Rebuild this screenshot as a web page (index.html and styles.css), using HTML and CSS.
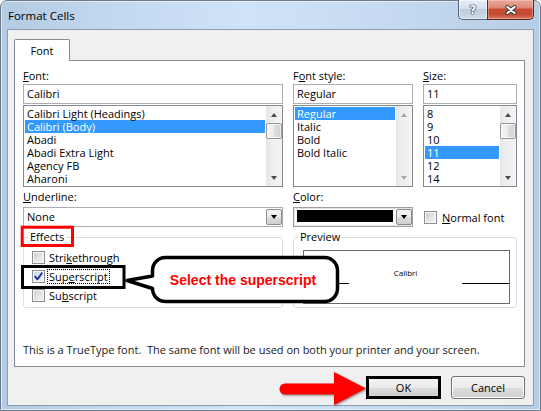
FILE: index.html
```html
<!DOCTYPE html>
<html>
<head>
<meta charset="utf-8">
<title>Format Cells</title>
<link rel="stylesheet" href="styles.css">
</head>
<body>
<div class="window">
  <div class="titlebar">
    <div class="title">Format Cells</div>
    <div class="caption">
      <div class="cap-btn cap-help"><span>?</span></div>
      <div class="cap-btn cap-close">
        <svg width="12" height="10" viewBox="0 0 12 10">
          <path d="M2.5 2 L9.5 8 M9.5 2 L2.5 8" stroke="#3b3b3b" stroke-width="4.2" stroke-linecap="round" fill="none"/>
          <path d="M2.5 2 L9.5 8 M9.5 2 L2.5 8" stroke="#ffffff" stroke-width="2.2" stroke-linecap="round" fill="none"/>
        </svg>
      </div>
    </div>
  </div>
  <div class="client">
    <div class="tabs"><div class="tab">Font</div></div>
    <div class="panel">
      <div class="grid3">
        <div class="col">
          <div class="lbl"><u>F</u>ont:</div>
          <div class="field">Calibri</div>
          <div class="list">
            <div class="items">
              <div class="item">Calibri Light (Headings)</div>
              <div class="item sel">Calibri (Body)</div>
              <div class="item">Abadi</div>
              <div class="item">Abadi Extra Light</div>
              <div class="item">Agency FB</div>
              <div class="item">Aharoni</div>
            </div>
            <div class="vscroll">
              <div class="sb-btn"><span class="tri-up"></span></div>
              <div class="thumb"></div>
              <div class="track"></div>
              <div class="sb-btn"><span class="tri-down"></span></div>
            </div>
          </div>
        </div>
        <div class="col">
          <div class="lbl">F<u>o</u>nt style:</div>
          <div class="field">Regular</div>
          <div class="list">
            <div class="items">
              <div class="item sel">Regular</div>
              <div class="item">Italic</div>
              <div class="item">Bold</div>
              <div class="item">Bold Italic</div>
            </div>
            <div class="vscroll disabled">
              <div class="sb-btn"><span class="tri-up"></span></div>
              <div class="track"></div>
              <div class="sb-btn"><span class="tri-down"></span></div>
            </div>
          </div>
        </div>
        <div class="col">
          <div class="lbl"><u>S</u>ize:</div>
          <div class="field">11</div>
          <div class="list">
            <div class="items">
              <div class="item">8</div>
              <div class="item">9</div>
              <div class="item">10</div>
              <div class="item sel">11</div>
              <div class="item">12</div>
              <div class="item">14</div>
            </div>
            <div class="vscroll">
              <div class="sb-btn"><span class="tri-up"></span></div>
              <div class="thumb"></div>
              <div class="track"></div>
              <div class="sb-btn"><span class="tri-down"></span></div>
            </div>
          </div>
        </div>
      </div>

      <div class="grid3 combos">
        <div class="lbl"><u>U</u>nderline:</div>
        <div class="lbl"><u>C</u>olor:</div>
        <div class="lbl"></div>
        <div class="combo"><span class="combo-text">None</span><span class="drop"><span class="tri-down dark"></span></span></div>
        <div class="combo combo-color"><span class="swatch"></span><span class="drop"><span class="tri-down dark"></span></span></div>
        <div class="check normal"><span class="cb"></span><span><u>N</u>ormal font</span></div>
      </div>

      <div class="groups">
        <fieldset class="group effects">
          <legend>Effects</legend>
          <div class="check"><span class="cb"></span><span>Stri<u>k</u>ethrough</span></div>
          <div class="check"><span class="cb checked"><svg width="11" height="11" viewBox="0 0 11 11"><path d="M2.2 5.6 L4.5 8.3 L8.8 2.2" stroke="#1d2f8c" stroke-width="1.9" fill="none" stroke-linecap="round" stroke-linejoin="round"/></svg></span><span class="focus">Sup<u>e</u>rscript</span></div>
          <div class="check"><span class="cb"></span><span>Su<u>b</u>script</span></div>
        </fieldset>
        <fieldset class="group preview">
          <legend>Preview</legend>
          <div class="pv-box">
            <span class="pv-line"></span>
            <span class="pv-text">Calibri</span>
            <span class="pv-line right"></span>
          </div>
        </fieldset>
      </div>

      <div class="note">This is a TrueType font.&nbsp; The same font will be used on both your printer and your screen.</div>
    </div>
    <div class="buttons">
      <div class="btn marked">OK</div>
      <div class="btn cancel">Cancel</div>
    </div>
  </div>
</div>

<svg class="annot" width="541" height="411" viewBox="0 0 541 411">
  <rect x="22.2" y="227.2" width="50.3" height="18.3" fill="none" stroke="#ff0000" stroke-width="3"/>
  <rect x="22.5" y="266.5" width="101.5" height="21" fill="none" stroke="#000000" stroke-width="3"/>
  <path d="M165.5,257.5 H324.5 A13,13 0 0 1 337.5,270.5 V288.5 A13,13 0 0 1 324.5,301.5 H165.5 A13,13 0 0 1 152.5,288.5 L127,280.5 L152.5,276 V270.5 A13,13 0 0 1 165.5,257.5 Z" fill="#ffffff" stroke="#000000" stroke-width="3.5" stroke-linejoin="round"/>
  <text x="243" y="285" text-anchor="middle" class="callout-text">Select the superscript</text>
  <path class="arrow" d="M285,383.5 H334 V372 L366,388.5 L334,405 V394.5 H285 A5.5,5.5 0 0 1 285,383.5 Z"/>
</svg>
</body>
</html>
```

FILE: styles.css
```css
* { box-sizing: border-box; }
html, body { margin: 0; padding: 0; }
body {
  width: 541px;
  height: 411px;
  overflow: hidden;
  position: relative;
  background: #ffffff;
  font-family: "Open Sans", "Noto Sans", sans-serif;
  font-size: 11px;
  color: #000;
}
u { text-decoration: underline; text-underline-offset: 1px; }

/* window frame */
.window {
  width: 541px;
  height: 411px;
  display: flex;
  flex-direction: column;
  padding: 0 6px 4px 6px;
  border: 1px solid #6d7c8d;
  border-radius: 7px 7px 0 0;
  background: linear-gradient(to right, #b3cbe3 0%, #c2d8ef 20%, #cfe3f8 45%, #c6dbf1 70%, #b6cee6 100%);
  box-shadow: inset 0 0 0 1px rgba(255,255,255,0.55);
}
.titlebar {
  height: 28px;
  flex: none;
  display: flex;
  align-items: flex-start;
}
.title {
  margin: 7px 0 0 1px;
  font-size: 11.5px;
  line-height: 16px;
  color: #000;
}
.caption {
  margin: -1px 0 0 auto;
  display: flex;
}
.cap-btn {
  height: 20px;
  display: flex;
  align-items: center;
  justify-content: center;
}
.cap-help {
  width: 29px;
  border: 1px solid #56637a;
  border-top: none;
  border-right: none;
  border-radius: 0 0 0 5px;
  background: linear-gradient(#e8eff7 0%, #d5e0ec 45%, #bdccdc 50%, #cfdbe8 100%);
  box-shadow: inset 0 0 0 1px rgba(255,255,255,0.5);
}
.cap-help span {
  font-family: "DejaVu Sans", sans-serif;
  font-weight: bold;
  font-size: 12px;
  line-height: 12px;
  color: #fff;
  text-shadow: 0 0 1px #2c3440, 0 0 1px #2c3440, 0 0 1px #2c3440, 0 0 1px #2c3440;
}
.cap-close {
  width: 47px;
  padding-top: 1px;
  border: 1px solid #5a2a22;
  border-top: none;
  border-radius: 0 0 5px 0;
  background: linear-gradient(#eaaa9b 0%, #dd8b77 40%, #c94b33 50%, #c44a33 75%, #d97b61 100%);
  box-shadow: inset 0 0 0 1px rgba(255,220,210,0.35);
}

/* client area */
.client {
  flex: 1;
  display: flex;
  flex-direction: column;
  background: #f0f0f0;
  border: 1px solid #8d9cae;
  padding: 9px 8px 0 6px;
}
.tabs {
  display: flex;
  height: 22px;
  flex: none;
  margin-bottom: -1px;
  position: relative;
  z-index: 1;
}
.tab {
  width: 56px;
  background: #fff;
  border: 1px solid #898c95;
  border-bottom: none;
  border-radius: 2px 2px 0 0;
  display: flex;
  align-items: center;
  justify-content: center;
  line-height: 14px;
  padding-top: 1px;
}
.panel {
  height: 307px;
  flex: none;
  background: #fff;
  border: 1px solid #898c95;
  padding: 8px 7px 8px 8px;
  display: flex;
  flex-direction: column;
}

.grid3 {
  display: grid;
  grid-template-columns: 260px 120px 94px;
  column-gap: 10px;
}
.lbl {
  height: 14px;
  line-height: 14px;
  white-space: nowrap;
}
.field {
  margin-top: 1px;
  height: 20px;
  border: 1px solid #abadb3;
  padding: 0 3px;
  line-height: 18px;
  background: #fff;
}
.list {
  margin-top: 1px;
  height: 82px;
  border: 1px solid #828790;
  display: flex;
  background: #fff;
}
.items {
  flex: 1;
  padding: 1px;
  overflow: hidden;
}
.item {
  height: 13px;
  line-height: 13px;
  padding-left: 2px;
  white-space: nowrap;
}
.item.sel {
  background: #3399ff;
  color: #fff;
}
.vscroll {
  width: 16px;
  flex: none;
  display: flex;
  flex-direction: column;
  background: linear-gradient(to right, #e6e6e6, #efefef 40%, #f3f3f3);
}
.sb-btn {
  height: 17px;
  flex: none;
  display: flex;
  align-items: center;
  justify-content: center;
}
.tri-up {
  width: 0;
  height: 0;
  border-left: 3.5px solid transparent;
  border-right: 3.5px solid transparent;
  border-bottom: 4px solid #4b4b4b;
}
.tri-down {
  width: 0;
  height: 0;
  border-left: 3.5px solid transparent;
  border-right: 3.5px solid transparent;
  border-top: 4px solid #4b4b4b;
}
.tri-down.dark { border-top-color: #000; }
.vscroll.disabled .tri-up { border-bottom-color: #a7a7a7; }
.vscroll.disabled .tri-down { border-top-color: #a7a7a7; }
.thumb {
  height: 16px;
  flex: none;
  border: 1px solid #979797;
  border-radius: 2px;
  background: linear-gradient(to right, #f6f6f6, #ececec 45%, #dedede 55%, #d2d2d2);
  box-shadow: inset 0 0 0 1px rgba(255,255,255,0.6);
}
.track { flex: 1; }

/* combos */
.combos {
  margin-top: 3px;
  grid-template-rows: 14px 20px;
  row-gap: 3px;
}
.combo {
  height: 20px;
  border: 1px solid #abadb3;
  display: flex;
  background: #fff;
}
.combo-text {
  flex: 1;
  padding-left: 3px;
  line-height: 18px;
}
.drop {
  width: 16px;
  margin: 1px 0 1px auto;
  border: 1px solid #8c8c8c;
  border-radius: 2px;
  background: linear-gradient(#f3f3f3, #ebebeb 50%, #dddddd 51%, #cfcfcf);
  display: flex;
  align-items: center;
  justify-content: center;
}
.combo-color {
  border-color: #9f9f9f;
  box-shadow: inset 0 0 0 1px #e4e4e4;
}
.swatch {
  width: 96px;
  height: 12px;
  margin: 2px 0 0 3px;
  background: #000;
}

/* check boxes */
.check {
  display: flex;
  align-items: center;
  height: 19px;
  white-space: nowrap;
}
.cb {
  width: 13px;
  height: 13px;
  flex: none;
  margin-right: 4px;
  border: 1px solid #8e8f8f;
  background: linear-gradient(135deg, #cfcfcf, #f7f7f7);
  box-shadow: inset 0 0 0 1px #f6f6f6;
  display: flex;
  align-items: center;
  justify-content: center;
}
.cb.checked {
  background: linear-gradient(135deg, #c3d6ec, #f1f6fb);
}
.normal {
  padding-left: 1px;
  align-self: center;
}
.normal .cb { margin-right: 5px; }
.focus {
  border: 1px dotted #000;
  padding: 0 1px;
  margin-left: -2px;
  line-height: 13px;
}

/* groups */
.groups {
  display: flex;
  gap: 10px;
  margin-top: 3px;
}
fieldset.group {
  margin: 0;
  min-width: 0;
  height: 78px;
  border: 1px solid #d5dfe5;
  border-radius: 3px;
}
fieldset.effects {
  width: 260px;
  padding: 4px 0 0 8px;
}
fieldset.preview {
  width: 224px;
  padding: 6px 0 0 9px;
}
legend {
  padding: 0 2px;
  height: 14px;
  line-height: 14px;
}
.effects legend { margin-left: -4px; }
.preview legend { margin-left: -5px; }
.pv-box {
  width: 207px;
  height: 54px;
  border: 1px solid #6b6b6b;
  display: flex;
  align-items: flex-start;
}
.pv-line {
  width: 45px;
  height: 1px;
  margin-top: 32px;
  background: #000;
  flex: none;
}
.pv-line.right { width: 47px; }
.pv-text {
  flex: 1;
  text-align: center;
  font-size: 8px;
  line-height: 10px;
  margin-top: 17px;
}

.note {
  margin-top: auto;
  line-height: 16px;
  white-space: nowrap;
  color: #1a1a1a;
}

/* buttons */
.buttons {
  display: flex;
  justify-content: flex-end;
  gap: 10px;
  margin-top: 9px;
  flex: none;
}
.btn {
  width: 75px;
  height: 23px;
  border: 1px solid #707070;
  border-radius: 3px;
  background: linear-gradient(#f2f2f2 0%, #ebebeb 50%, #dddddd 51%, #cfcfcf 100%);
  box-shadow: inset 0 0 0 1px #fcfcfc;
  display: flex;
  align-items: center;
  justify-content: center;
}
.btn.cancel { width: 74px; }
.btn.marked {
  border: 3px solid #000;
  border-radius: 0;
  box-shadow: none;
}

/* annotations */
.annot {
  position: absolute;
  left: 0;
  top: 0;
  pointer-events: none;
}
.callout-text {
  font-family: "Liberation Sans", Arial, sans-serif;
  font-weight: bold;
  font-size: 14px;
  fill: #ff0000;
}
.arrow {
  fill: #ff0000;
  filter: drop-shadow(1px 1px 1px rgba(0,0,0,0.45));
}
```
